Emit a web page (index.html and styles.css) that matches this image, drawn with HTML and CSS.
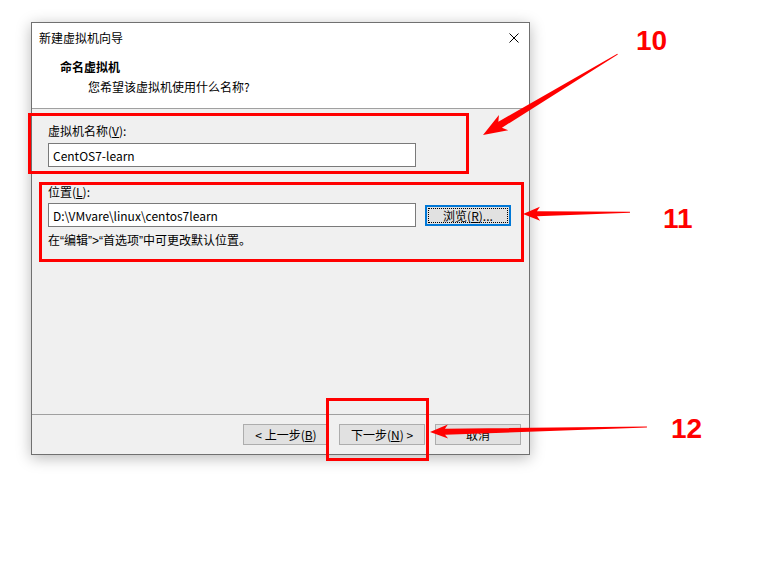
FILE: index.html
```html
<!DOCTYPE html>
<html lang="zh-CN">
<head>
<meta charset="UTF-8">
<title>新建虚拟机向导</title>
<link rel="stylesheet" href="styles.css">
</head>
<body>

<div class="dialog">
	<div class="titlebar">
		<span class="title">新建虚拟机向导</span>
		<svg class="close" viewBox="0 0 10 10" width="10" height="10">
			<path d="M0.5 0.5L9.5 9.5M9.5 0.5L0.5 9.5" stroke="#000" stroke-width="1" fill="none"/>
		</svg>
	</div>

	<div class="header">
		<h1>命名虚拟机</h1>
		<p>您希望该虚拟机使用什么名称?</p>
	</div>

	<div class="content">
		<label class="label">虚拟机名称(<u>V</u>):</label>
		<div class="row">
			<input class="field" type="text" value="CentOS7-learn">
		</div>

		<label class="label label-gap">位置(<u>L</u>):</label>
		<div class="row">
			<input class="field" type="text" value="D:\VMvare\linux\centos7learn">
			<button class="btn btn-focus">浏览(<u>R</u>)...</button>
		</div>
		<p class="hint">在<span class="q">“</span>编辑<span class="q">”&gt;“</span>首选项<span class="q">”</span>中可更改默认位置。</p>
	</div>

	<div class="footer">
		<button class="btn">&lt; 上一步(<u>B</u>)</button>
		<button class="btn">下一步(<u>N</u>) &gt;</button>
		<button class="btn">取消</button>
	</div>
</div>

<!-- annotations drawn over the screenshot -->
<svg class="marks" viewBox="0 0 759 567" width="759" height="567">
	<g fill="none" stroke="#f00" stroke-width="3">
		<rect x="29.5" y="114.5" width="438" height="58"/>
		<rect x="40.5" y="183.5" width="482" height="77"/>
		<rect x="327.5" y="399.5" width="100" height="60"/>
	</g>
	<g fill="#f00">
		<polygon transform="translate(483 135) rotate(-31)" points="0,0 24,-9 20,-3.5 157,-0.5 157,0.5 20,3.5 24,9"/>
		<polygon transform="translate(523 214) rotate(-1)" points="0,0 17,-7 14,-2.5 107,-0.5 107,0.5 14,2.5 17,7"/>
		<polygon transform="translate(430 432) rotate(-1.3)" points="0,0 18,-7 15,-3 217,-0.5 217,0.5 15,3 18,7"/>
	</g>
	<g class="num" fill="#f00">
		<text x="636" y="50">10</text>
		<text x="663" y="228">11</text>
		<text x="671" y="438">12</text>
	</g>
</svg>

</body>
</html>
```

FILE: styles.css
```css
html, body {
	margin: 0;
	padding: 0;
	background: #fff;
}
body {
	position: relative;
	width: 759px;
	height: 567px;
	overflow: hidden;
	font: 12px/18px "Noto Sans CJK SC", "Noto Sans", sans-serif;
	color: #000;
}
u {
	text-decoration: underline;
	text-underline-offset: 1px;
}

.dialog {
	display: flex;
	flex-direction: column;
	margin: 22px 0 0 31px;
	width: 497px;
	height: 431px;
	border: 1px solid #707070;
	background: #f0f0f0;
	box-shadow: 0 3px 14px rgba(0, 0, 0, .28);
}

.titlebar {
	display: flex;
	align-items: center;
	justify-content: space-between;
	height: 30px;
	padding: 0 10px 0 7px;
	background: #fff;
}
.close {
	display: block;
}

.header {
	height: 51px;
	padding: 4px 0 0 28px;
	background: #fff;
	border-bottom: 1px solid #a0a0a0;
}
.header h1 {
	margin: 0;
	font-size: 12px;
	line-height: 20px;
	font-weight: bold;
}
.header p {
	margin: 0;
	padding-left: 28px;
	line-height: 20px;
}

.content {
	flex: 1;
	padding: 13px 16px 0;
}
.label {
	display: block;
	line-height: 18px;
}
.label-gap {
	margin-top: 16px;
}
.row {
	display: flex;
	align-items: center;
	gap: 9px;
	margin-top: 3px;
}
.label-gap + .row {
	margin-top: 2px;
}
.field {
	box-sizing: border-box;
	width: 368px;
	height: 24px;
	margin: 0;
	padding: 0 4px;
	border: 1px solid #7a7a7a;
	background: #fff;
	font: inherit;
	color: #000;
}
.hint {
	margin: 4px 0 0;
	line-height: 18px;
}
.hint .q {
	font-family: "Liberation Sans", Arial, sans-serif;
}

.footer {
	display: flex;
	justify-content: flex-end;
	gap: 10px;
	height: 40px;
	padding: 9px 8px 0 0;
	box-sizing: border-box;
	border-top: 1px solid #a0a0a0;
}

.btn {
	box-sizing: border-box;
	width: 86px;
	height: 21px;
	margin: 0;
	padding: 0;
	border: 1px solid #adadad;
	background: #e1e1e1;
	font: inherit;
	line-height: 18px;
	color: #000;
}
.btn-focus {
	border: 2px solid #0078d7;
	outline: 1px dotted #000;
	outline-offset: -4px;
}

.marks {
	position: absolute;
	top: 0;
	left: 0;
	pointer-events: none;
}
.num text {
	font-family: "Liberation Sans", Arial, sans-serif;
	font-weight: bold;
	font-size: 28px;
}
```
